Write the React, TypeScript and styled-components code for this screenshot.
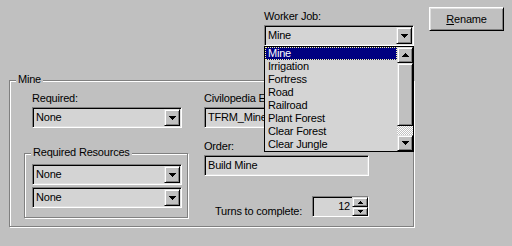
import styled, { createGlobalStyle } from "styled-components";

const GlobalStyle = createGlobalStyle`
  body {
    margin: 0;
    background: #c0c0c0;
    font-family: "Liberation Sans", Arial, sans-serif;
    font-size: 11px;
    letter-spacing: -0.2px;
    color: #000;
  }
`;

const Page = styled.div`
  width: 512px;
  height: 246px;
  box-sizing: border-box;
  padding: 7px 8px 0 9px;
  background: #c0c0c0;
  overflow: hidden;
`;

const TopRow = styled.div`
  display: flex;
  justify-content: flex-end;
  align-items: flex-start;
  gap: 15px;
  height: 73px;
`;

const WorkerColumn = styled.div`
  position: relative;
  width: 150px;
  padding-top: 3px;
`;

const Label = styled.div<{ $top?: number }>`
  line-height: 13px;
  height: 13px;
  margin-top: ${(p) => p.$top ?? 0}px;
  margin-bottom: 2px;
  white-space: nowrap;
`;

const Sunken = styled.div<{ $width: number }>`
  width: ${(p) => p.$width}px;
  height: 21px;
  box-sizing: border-box;
  border: 1px solid;
  border-color: #808080 #fff #fff #808080;
  box-shadow: inset 1px 1px 0 #000, inset -1px -1px 0 #dfdfdf;
  background: #d4d4d4;
  display: flex;
  align-items: center;
  padding: 1px 1px 1px 3px;
  line-height: 13px;
  white-space: nowrap;
  overflow: hidden;
`;

const Value = styled.span`
  flex: 1;
  overflow: hidden;
`;

const Raised = styled.div`
  box-sizing: border-box;
  background: #c0c0c0;
  border: 1px solid;
  border-color: #dfdfdf #000 #000 #dfdfdf;
  box-shadow: inset 1px 1px 0 #fff, inset -1px -1px 0 #808080;
  display: flex;
  align-items: center;
  justify-content: center;
`;

const DropButton = styled(Raised)`
  width: 16px;
  height: 17px;
  flex: none;
`;

const RenameButton = styled(Raised)`
  width: 75px;
  height: 24px;
  border-color: #fff #000 #000 #fff;
  box-shadow: inset 1px 1px 0 #dfdfdf, inset -1px -1px 0 #808080;
  padding-bottom: 1px;
`;

const DropList = styled.div`
  position: absolute;
  top: 100%;
  left: 0;
  width: 150px;
  height: 106px;
  box-sizing: border-box;
  border: 1px solid #000;
  background: #d4d4d4;
  display: flex;
  z-index: 2;
`;

const Items = styled.div`
  flex: 1;
`;

const Item = styled.div<{ $selected?: boolean }>`
  height: 13px;
  line-height: 13px;
  padding-left: 3px;
  white-space: nowrap;
  background: ${(p) => (p.$selected ? "#000080" : "transparent")};
  color: ${(p) => (p.$selected ? "#fff" : "#000")};
  outline: ${(p) => (p.$selected ? "1px dotted #ffffa0" : "none")};
  outline-offset: -1px;
`;

const ScrollBar = styled.div`
  width: 16px;
  display: flex;
  flex-direction: column;
`;

const ScrollButton = styled(Raised)`
  width: 16px;
  height: 16px;
`;

const Thumb = styled(Raised)`
  width: 16px;
  height: 63px;
`;

const Track = styled.div`
  flex: 1;
  background-image: conic-gradient(#fff 25%, #c0c0c0 0 50%, #fff 0 75%, #c0c0c0 0);
  background-size: 2px 2px;
`;

const Group = styled.div<{ $width: number; $height: number }>`
  position: relative;
  width: ${(p) => p.$width}px;
  height: ${(p) => p.$height}px;
  box-sizing: border-box;
  border: 1px solid #808080;
  box-shadow: inset 1px 1px 0 #fff, 1px 1px 0 #fff;
`;

const Caption = styled.span`
  position: absolute;
  top: -8px;
  left: 6px;
  padding: 0 2px 0 2px;
  line-height: 13px;
  background: #c0c0c0;
  white-space: nowrap;
`;

const MainBody = styled.div`
  display: flex;
  gap: 16px;
  padding: 11px 0 0 14px;
`;

const LeftColumn = styled.div`
  width: 164px;
`;

const RightColumn = styled.div`
  width: 165px;
`;

const Indent = styled.div`
  margin-left: 8px;
`;

const ResourceBody = styled.div`
  display: flex;
  flex-direction: column;
  gap: 2px;
  padding: 10px 0 0 7px;
`;

const SpinRow = styled.div`
  display: flex;
  align-items: flex-end;
  gap: 10px;
  margin-top: 20px;
  padding-left: 11px;
`;

const TurnsLabel = styled.span`
  line-height: 13px;
  width: 87px;
  margin-bottom: -1px;
  white-space: nowrap;
`;

const Spinner = styled.div`
  width: 57px;
  height: 21px;
  box-sizing: border-box;
  border: 1px solid;
  border-color: #808080 #fff #fff #808080;
  box-shadow: inset 1px 1px 0 #000;
  background: #d4d4d4;
  display: flex;
`;

const SpinValue = styled.span`
  flex: 1;
  text-align: right;
  padding-right: 2px;
  line-height: 17px;
  padding-top: 1px;
`;

const SpinButtons = styled.div`
  width: 16px;
  display: flex;
  flex-direction: column;
`;

const SpinHalf = styled(Raised)<{ $h: number }>`
  height: ${(p) => p.$h}px;
`;

const DownArrow = () => (
  <svg width="7" height="4" viewBox="0 0 7 4" shapeRendering="crispEdges">
    <path d="M0 0h7v1H0zM1 1h5v1H1zM2 2h3v1H2zM3 3h1v1H3z" fill="#000" />
  </svg>
);

const UpArrow = () => (
  <svg width="7" height="4" viewBox="0 0 7 4" shapeRendering="crispEdges">
    <path d="M3 0h1v1H3zM2 1h3v1H2zM1 2h5v1H1zM0 3h7v1H0z" fill="#000" />
  </svg>
);

const SmallUp = () => (
  <svg width="5" height="3" viewBox="0 0 5 3" shapeRendering="crispEdges">
    <path d="M2 0h1v1H2zM1 1h3v1H1zM0 2h5v1H0z" fill="#000" />
  </svg>
);

const SmallDown = () => (
  <svg width="5" height="3" viewBox="0 0 5 3" shapeRendering="crispEdges">
    <path d="M0 0h5v1H0zM1 1h3v1H1zM2 2h1v1H2z" fill="#000" />
  </svg>
);

function Combo({ value, width = 150 }: { value: string; width?: number }) {
  return (
    <Sunken $width={width}>
      <Value>{value}</Value>
      <DropButton>
        <DownArrow />
      </DropButton>
    </Sunken>
  );
}

const jobs = [
  "Mine",
  "Irrigation",
  "Fortress",
  "Road",
  "Railroad",
  "Plant Forest",
  "Clear Forest",
  "Clear Jungle",
];

export default function App() {
  return (
    <>
      <GlobalStyle />
      <Page>
        <TopRow>
          <WorkerColumn>
            <Label>Worker Job:</Label>
            <Combo value="Mine" />
            <DropList>
              <Items>
                {jobs.map((job, i) => (
                  <Item key={job} $selected={i === 0}>
                    {job}
                  </Item>
                ))}
              </Items>
              <ScrollBar>
                <ScrollButton>
                  <UpArrow />
                </ScrollButton>
                <Thumb />
                <Track />
                <ScrollButton>
                  <DownArrow />
                </ScrollButton>
              </ScrollBar>
            </DropList>
          </WorkerColumn>
          <RenameButton>
            <span>
              <u>R</u>ename
            </span>
          </RenameButton>
        </TopRow>

        <Group $width={405} $height={147}>
          <Caption>Mine</Caption>
          <MainBody>
            <LeftColumn>
              <Indent>
                <Label>Required:</Label>
                <Combo value="None" />
              </Indent>
              <div style={{ height: 25 }} />
              <Group $width={164} $height={65}>
                <Caption>Required Resources</Caption>
                <ResourceBody>
                  <Combo value="None" />
                  <Combo value="None" />
                </ResourceBody>
              </Group>
            </LeftColumn>
            <RightColumn>
              <Label>Civilopedia Entry:</Label>
              <Sunken $width={165}>TFRM_Mine</Sunken>
              <Label $top={12}>Order:</Label>
              <Sunken $width={165}>Build Mine</Sunken>
              <SpinRow>
                <TurnsLabel>Turns to complete:</TurnsLabel>
                <Spinner>
                  <SpinValue>12</SpinValue>
                  <SpinButtons>
                    <SpinHalf $h={10}>
                      <SmallUp />
                    </SpinHalf>
                    <SpinHalf $h={9}>
                      <SmallDown />
                    </SpinHalf>
                  </SpinButtons>
                </Spinner>
              </SpinRow>
            </RightColumn>
          </MainBody>
        </Group>
      </Page>
    </>
  );
}
